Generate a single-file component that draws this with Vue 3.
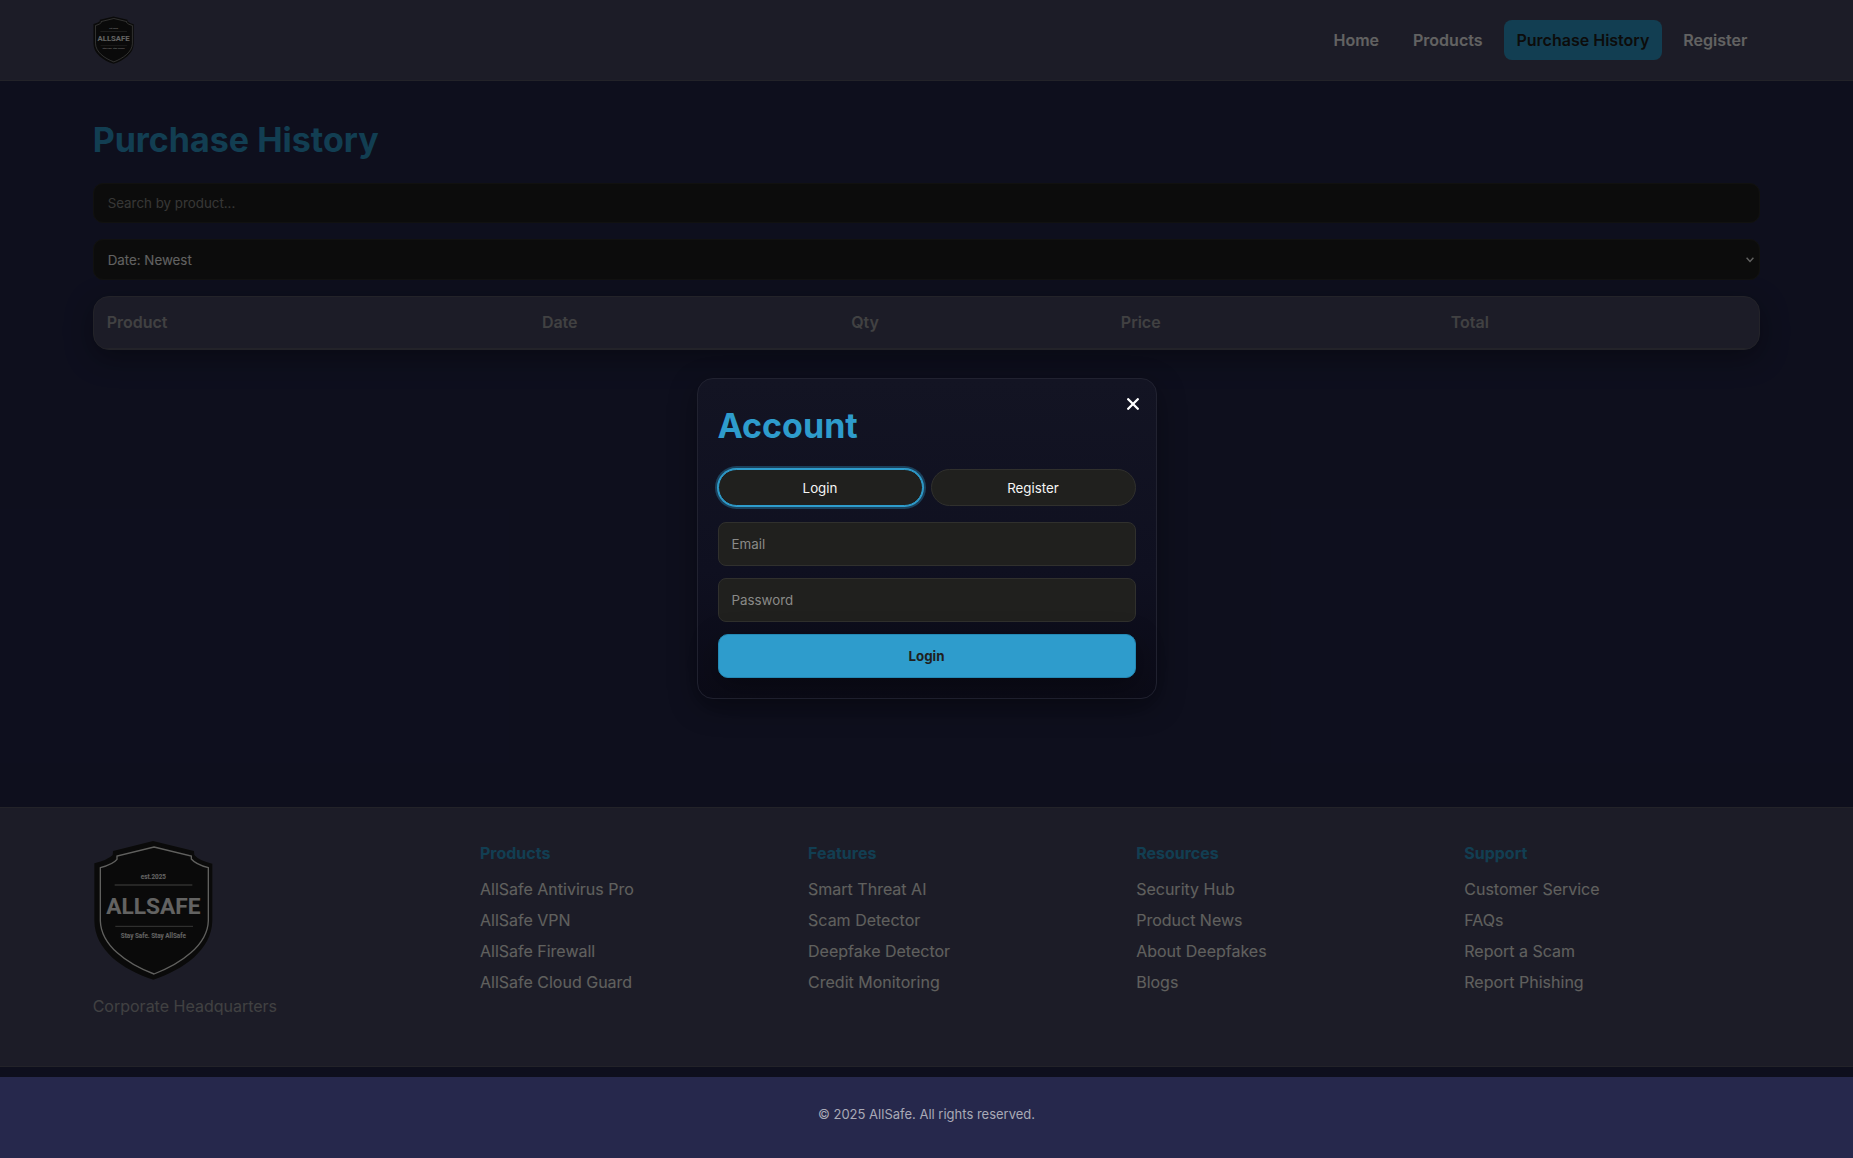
<script setup>
import { h, ref } from 'vue'

const navLinks = ['Home', 'Products', 'Purchase History', 'Register']
const columns = ['Product', 'Date', 'Qty', 'Price', 'Total']
const footerGroups = [
  { title: 'Products', links: ['AllSafe Antivirus Pro', 'AllSafe VPN', 'AllSafe Firewall', 'AllSafe Cloud Guard'] },
  { title: 'Features', links: ['Smart Threat AI', 'Scam Detector', 'Deepfake Detector', 'Credit Monitoring'] },
  { title: 'Resources', links: ['Security Hub', 'Product News', 'About Deepfakes', 'Blogs'] },
  { title: 'Support', links: ['Customer Service', 'FAQs', 'Report a Scam', 'Report Phishing'] },
]
const search = ref('')
const sort = ref('newest')
const tab = ref('Login')
const email = ref('')
const password = ref('')

// Shield logo, shared by the top bar and the footer
const label = (y, size, text) => h('text', { x: 219, y, 'font-size': size }, text)
const Shield = () =>
  h('svg', { viewBox: '38 120 360 420', role: 'img', 'aria-label': 'AllSafe' }, [
    h('path', {
      fill: '#1a1a19',
      d: 'M218 123 L341 153 L342 165 Q358 183 396 191 V362 C394 450 310 508 219 539 C125 508 43 450 42 362 V190 Q82 180 97 165 L98 153 Z',
    }),
    h('path', {
      fill: 'none',
      stroke: '#f0f0ec',
      'stroke-width': 4,
      d: 'M221 141 L333 168 V177 Q346 193 384 203 V362 C382 436 300 492 221 522 C140 492 62 436 60 362 V203 Q98 193 110 178 V168 Z',
    }),
    h('path', { stroke: '#777774', 'stroke-width': 5, d: 'M103 255 H336' }),
    h('path', { stroke: '#8a8a86', 'stroke-width': 3, d: 'M105 379 H338' }),
    h('g', { 'text-anchor': 'middle', fill: '#f8f8f6', 'font-family': 'Roboto, sans-serif', 'font-weight': 700 }, [
      label(236, 19, 'est.2025'),
      label(343, 68, 'ALLSAFE'),
      label(413, 19, 'Stay Safe. Stay AllSafe'),
    ]),
  ])
</script>

<template>
  <div class="page">
    <div class="screen">
      <header class="topbar">
        <div class="container topbar-inner">
          <a href="#" class="brand"><Shield class="logo-small" /></a>
          <nav class="nav">
            <a v-for="l in navLinks" :key="l" href="#" :class="{ active: l === 'Purchase History' }">{{ l }}</a>
          </nav>
        </div>
      </header>

      <main class="container main">
        <h1 class="title">Purchase History</h1>
        <div class="filters">
          <input v-model="search" class="filter" type="search" placeholder="Search by product..." aria-label="Search by product" />
          <div class="select-wrap">
            <select v-model="sort" class="filter" aria-label="Sort by">
              <option value="newest">Date: Newest</option>
              <option value="oldest">Date: Oldest</option>
            </select>
            <svg class="chevron" viewBox="0 0 8 6" width="8" height="6" aria-hidden="true"><path d="M0.6 0.8 L4 4.4 L7.4 0.8" fill="none" stroke="#f5f5f5" stroke-width="1.4" /></svg>
          </div>
        </div>
        <table class="history">
          <thead>
            <tr><th v-for="c in columns" :key="c" scope="col">{{ c }}</th></tr>
          </thead>
        </table>
      </main>

      <footer class="footer">
        <div class="container footer-grid">
          <div>
            <Shield class="logo-large" />
            <p class="address">Corporate Headquarters</p>
          </div>
          <section v-for="g in footerGroups" :key="g.title">
            <h2>{{ g.title }}</h2>
            <ul>
              <li v-for="l in g.links" :key="l"><a href="#">{{ l }}</a></li>
            </ul>
          </section>
        </div>
      </footer>

      <div class="overlay">
        <div class="modal" role="dialog" aria-labelledby="account-title">
          <button class="close" type="button" aria-label="Close">
            <svg viewBox="0 0 12 12" width="12" height="12"><path d="M1.2 1.2 L10.8 10.8 M10.8 1.2 L1.2 10.8" stroke="#fff" stroke-width="2.3" stroke-linecap="round" /></svg>
          </button>
          <h2 id="account-title" class="title">Account</h2>
          <div class="tabs">
            <button v-for="t in ['Login', 'Register']" :key="t" type="button" class="tab" :class="{ selected: tab === t }" @click="tab = t">{{ t }}</button>
          </div>
          <form class="form" @submit.prevent>
            <input v-model="email" class="field" type="email" placeholder="Email" aria-label="Email" />
            <input v-model="password" class="field" type="password" placeholder="Password" aria-label="Password" />
            <button class="field submit" type="submit">Login</button>
          </form>
        </div>
      </div>
    </div>

    <div class="copyright">© 2025 AllSafe. All rights reserved.</div>
  </div>
</template>

<style>
body {
  margin: 0;
  background: #26284c;
}
</style>

<style scoped>
.page {
  --accent: #2e9ccc;
  --bg: #23264a;
  --surface: #484861;
  --line: #575766;
  --field: #20201e;
  --muted: #a2a2a6;
  min-height: 100vh;
  display: flex;
  flex-direction: column;
  font-family: Inter, sans-serif;
  font-size: 16px;
  line-height: 26px;
  color: #f5f5f5;
}
.page *,
.page {
  box-sizing: border-box;
}
a {
  color: inherit;
  text-decoration: none;
}
button,
input,
select {
  font-family: inherit;
  line-height: 16px;
}
.container {
  width: 90%;
  margin: 0 auto;
}
.screen {
  position: relative;
  flex: 1;
  display: flex;
  flex-direction: column;
  padding-bottom: 10px;
  background: var(--bg);
}
.topbar {
  background: var(--surface);
  border-bottom: 1px solid var(--line);
}
.topbar-inner {
  display: flex;
  align-items: center;
  justify-content: space-between;
  height: 80px;
}
.brand {
  display: flex;
}
.logo-small {
  width: 41px;
  height: 48px;
}
.nav {
  display: flex;
  gap: 8px;
}
.nav a {
  padding: 7px 13px;
  border-radius: 8px;
  font-weight: 600;
}
.nav a.active {
  background: var(--accent);
  color: #20201d;
}
.main {
  flex: 1;
  padding: 32px 0;
}
.title {
  margin: 0 0 16px;
  font-size: 34px;
  line-height: 54px;
  font-weight: 700;
  color: var(--accent);
}
.filters {
  display: flex;
  flex-direction: column;
  gap: 16px;
  margin-bottom: 16px;
}
.filter {
  display: block;
  width: 100%;
  height: 40px;
  padding: 0 14px;
  border: 1px solid #2c2c28;
  border-radius: 10px;
  background: var(--field);
  color: #f5f5f5;
}
.select-wrap {
  position: relative;
}
select.filter {
  height: 41px;
  appearance: none;
}
.chevron {
  position: absolute;
  right: 6px;
  top: 18px;
  pointer-events: none;
}
.filter::placeholder,
.field::placeholder {
  color: #8a8a88;
  opacity: 1;
}
.history {
  width: 100%;
  border: 1px solid var(--line);
  border-radius: 16px;
  border-spacing: 0;
  overflow: hidden;
  background: var(--surface);
  box-shadow: 0 8px 28px rgba(0, 0, 0, 0.35);
}
.history th {
  padding: 12px 13px 13px;
  border-bottom: 1px solid var(--line);
  text-align: left;
  font-weight: 600;
  color: var(--muted);
}
.footer {
  background: var(--surface);
  border-top: 1px solid var(--line);
  border-bottom: 1px solid var(--line);
  padding: 32px 0;
}
.footer-grid {
  display: grid;
  grid-template-columns: 6fr 5fr 5fr 5fr 5fr;
  gap: 32px;
  min-height: 194px;
}
.logo-large {
  display: block;
  width: 120px;
  height: 140px;
}
.address {
  margin: 13px 0 0;
  color: var(--muted);
}
.footer h2 {
  margin: 0 0 10px;
  font-size: 16px;
  line-height: 26px;
  color: var(--accent);
}
.footer ul {
  display: flex;
  flex-direction: column;
  gap: 5px;
  margin: 0;
  padding: 0;
  list-style: none;
  color: #f0f0ec;
}
.overlay {
  position: absolute;
  inset: 0;
  display: flex;
  align-items: center;
  justify-content: center;
  background: rgba(0, 0, 0, 0.6);
}
.modal {
  position: relative;
  width: 460px;
  max-width: 92%;
  padding: 20px;
  border: 1px solid #212230;
  border-radius: 16px;
  background: linear-gradient(#131423, #0f1020 60%, #0b0b17);
  box-shadow: 0 8px 28px rgba(0, 0, 0, 0.35);
}
.close {
  position: absolute;
  top: 12px;
  right: 10px;
  display: grid;
  place-items: center;
  width: 26px;
  height: 26px;
  padding: 0;
  border: 0;
  background: none;
}
.tabs {
  display: grid;
  grid-template-columns: 1fr 1fr;
  gap: 8px;
  margin-bottom: 16px;
}
.tab {
  height: 37px;
  border: 1px solid #30302d;
  border-radius: 999px;
  background: var(--field);
  color: #f5f5f5;
}
.tab.selected {
  border-color: var(--accent);
  box-shadow: 0 0 0 1px var(--accent), 0 0 0 3px rgba(46, 156, 204, 0.35);
}
.form {
  display: flex;
  flex-direction: column;
  gap: 12px;
}
.field {
  height: 44px;
  padding: 0 13px;
  border: 1px solid #30302d;
  border-radius: 8px;
  background: var(--field);
  color: #f5f5f5;
}
.submit {
  border-color: #2388b4;
  border-radius: 10px;
  background: var(--accent);
  color: #20201d;
  font-weight: 700;
  box-shadow: 0 8px 28px rgba(0, 0, 0, 0.35);
}
.copyright {
  padding: 24px 0 31px;
  background: #26284c;
  text-align: center;
  font-size: 13px;
  color: #a9aab6;
}
</style>
